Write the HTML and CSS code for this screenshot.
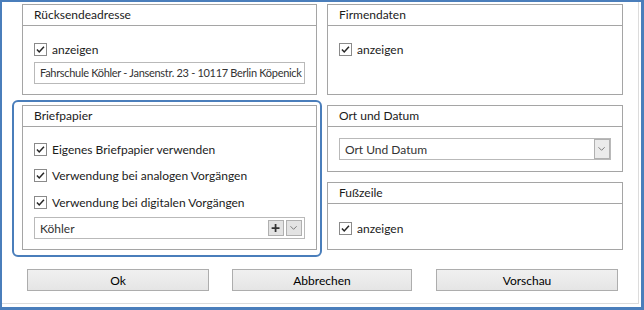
FILE: index.html
```html
<!DOCTYPE html>
<html lang="de">
<head>
    <meta charset="UTF-8">
    <title>Briefeinstellungen</title>
    <link rel="stylesheet" href="styles.css">
</head>
<body>
    <div class="window">
        <div class="panel">
            <div class="groups">
                <!-- Rücksendeadresse -->
                <div class="group group-return">
                    <div class="group-title">Rücksendeadresse</div>
                    <div class="group-body">
                        <label class="check"><span class="box"><svg viewBox="0 0 13 13"><path d="M2.3 6.6 L5 9.4 L10.6 3.2"/></svg></span>anzeigen</label>
                        <div class="textbox">Fahrschule Köhler - Jansenstr. 23 - 10117 Berlin Köpenick</div>
                    </div>
                </div>

                <!-- Firmendaten -->
                <div class="group group-company">
                    <div class="group-title">Firmendaten</div>
                    <div class="group-body">
                        <label class="check"><span class="box"><svg viewBox="0 0 13 13"><path d="M2.3 6.6 L5 9.4 L10.6 3.2"/></svg></span>anzeigen</label>
                    </div>
                </div>

                <!-- Briefpapier (focused) -->
                <div class="group group-paper">
                    <div class="group-title">Briefpapier</div>
                    <div class="group-body">
                        <label class="check"><span class="box"><svg viewBox="0 0 13 13"><path d="M2.3 6.6 L5 9.4 L10.6 3.2"/></svg></span>Eigenes Briefpapier verwenden</label>
                        <label class="check"><span class="box"><svg viewBox="0 0 13 13"><path d="M2.3 6.6 L5 9.4 L10.6 3.2"/></svg></span>Verwendung bei analogen Vorgängen</label>
                        <label class="check"><span class="box"><svg viewBox="0 0 13 13"><path d="M2.3 6.6 L5 9.4 L10.6 3.2"/></svg></span>Verwendung bei digitalen Vorgängen</label>
                        <div class="combo">
                            <span class="combo-text">Köhler</span>
                            <span class="combo-btn plus"><svg viewBox="0 0 16 15"><path d="M7.5 3 V12 M3 7.5 H12"/></svg></span>
                            <span class="combo-btn"><svg viewBox="0 0 16 15"><path d="M4 5.5 L7.5 9 L11 5.5"/></svg></span>
                        </div>
                    </div>
                </div>

                <div class="right-lower">
                    <!-- Ort und Datum -->
                    <div class="group group-place">
                        <div class="group-title">Ort und Datum</div>
                        <div class="group-body">
                            <div class="combo">
                                <span class="combo-text">Ort Und Datum</span>
                                <span class="combo-btn tall"><svg viewBox="0 0 16 18"><path d="M4 7 L7.5 10.5 L11 7"/></svg></span>
                            </div>
                        </div>
                    </div>

                    <!-- Fußzeile -->
                    <div class="group group-footer">
                        <div class="group-title">Fußzeile</div>
                        <div class="group-body">
                            <label class="check"><span class="box"><svg viewBox="0 0 13 13"><path d="M2.3 6.6 L5 9.4 L10.6 3.2"/></svg></span>anzeigen</label>
                        </div>
                    </div>
                </div>
            </div>

            <!-- Dialog buttons -->
            <div class="actions">
                <button class="btn btn-ok">Ok</button>
                <button class="btn btn-cancel">Abbrechen</button>
                <button class="btn btn-preview">Vorschau</button>
            </div>
        </div>
    </div>
</body>
</html>
```

FILE: styles.css
```css
/* Page and window frame */
body {
    margin: 0;
    font-family: Lato, "Noto Sans", sans-serif;
    font-size: 12px;
    color: #1b1b1b;
    background: #ffffff;
}

.window {
    width: 644px;
    height: 310px;
    box-sizing: border-box;
    border-style: solid;
    border-color: #4a7ebb;
    border-width: 2px 3px 3px 2px;
    background: #ffffff;
}

.panel {
    width: 637px;
    height: 302px;
    box-sizing: border-box;
    border-right: 1px solid #dcdcdc;
    border-bottom: 1px solid #dcdcdc;
    padding: 2px 0 0 20px;
}

/* Group boxes grid */
.groups {
    display: grid;
    grid-template-columns: 295px 296px;
    grid-template-rows: 91px 145px;
    column-gap: 10px;
    row-gap: 10px;
}

.right-lower {
    display: grid;
    grid-template-rows: 67px 68px;
    row-gap: 10px;
}

.group {
    position: relative;
    box-sizing: border-box;
    border: 1px solid #a5a5a5;
    display: flex;
    flex-direction: column;
}

.group-title {
    height: 20px;
    line-height: 20px;
    padding-left: 11px;
    border-bottom: 1px solid #a5a5a5;
}

.group-body {
    display: flex;
    flex-direction: column;
    padding: 0 11px;
}

.group-return .group-body,
.group-company .group-body {
    padding-top: 15px;
}

.group-paper .group-body {
    padding-top: 14px;
    gap: 10.5px;
}

.group-place .group-body {
    padding-top: 11px;
}

.group-footer .group-body {
    padding-top: 16px;
}

/* Focus rectangle round Briefpapier */
.group-paper::before {
    content: "";
    position: absolute;
    top: -6px;
    left: -11px;
    right: -6px;
    bottom: -8px;
    border: 2px solid #4a7ebb;
    border-radius: 6px;
    pointer-events: none;
}

/* Checkboxes */
.check {
    display: flex;
    align-items: center;
    height: 16px;
    gap: 5px;
}

.box {
    width: 13px;
    height: 13px;
    box-sizing: border-box;
    border: 1px solid #8a8a8a;
    background: #ffffff;
    display: flex;
}

.box svg {
    width: 11px;
    height: 11px;
}

.box path {
    fill: none;
    stroke: #262626;
    stroke-width: 1.8;
}

/* Text box and combos */
.textbox {
    margin-top: 5px;
    height: 22px;
    box-sizing: border-box;
    border: 1px solid #b9b9b9;
    line-height: 20px;
    padding-left: 5px;
    font-size: 11px;
    letter-spacing: -0.3px;
    color: #333333;
    white-space: nowrap;
    overflow: hidden;
}

.combo {
    height: 22px;
    box-sizing: border-box;
    border: 1px solid #b9b9b9;
    display: flex;
    align-items: center;
    padding: 0 2px 0 5px;
    gap: 2px;
    color: #333333;
}

.group-paper .combo {
    margin-top: -3.5px;
}

.group-place .combo {
    padding-right: 0;
}

.combo-text {
    flex: 1;
}

.combo-btn {
    width: 16px;
    height: 16px;
    box-sizing: border-box;
    border: 1px solid #b0b0b0;
    background: #e3e3e3;
    display: flex;
}

.combo-btn svg {
    width: 14px;
    height: 14px;
}

.combo-btn.tall {
    height: 20px;
    background: #ebebeb;
}

.combo-btn.tall svg {
    height: 18px;
}

.combo-btn path {
    fill: none;
    stroke: #6a6a6a;
    stroke-width: 1;
}

.combo-btn.plus path {
    stroke: #333333;
    stroke-width: 2;
}

/* Dialog buttons */
.actions {
    display: flex;
    margin-top: 19px;
    padding-left: 5px;
}

.btn {
    height: 22px;
    box-sizing: border-box;
    border: 1px solid #adadad;
    background: linear-gradient(#f0f0f0, #e5e5e5);
    font-family: inherit;
    font-size: 12px;
    color: #000000;
    padding: 0;
}

.btn-ok {
    width: 182px;
}

.btn-cancel {
    width: 180px;
    margin-left: 23px;
}

.btn-preview {
    width: 182px;
    margin-left: 24px;
}
```
